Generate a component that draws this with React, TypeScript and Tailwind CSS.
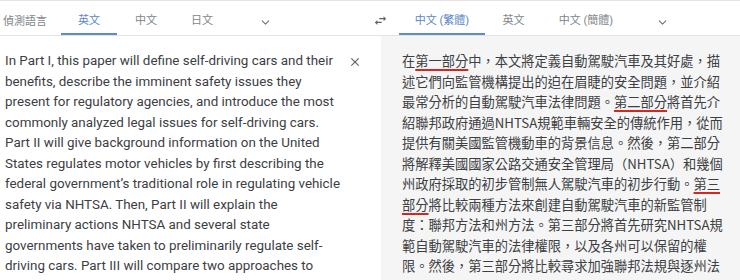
import { ChevronDown } from "lucide-react";

const source = [
  "In Part I, this paper will define self-driving cars and their",
  "benefits, describe the imminent safety issues they",
  "present for regulatory agencies, and introduce the most",
  "commonly analyzed legal issues for self-driving cars.",
  "Part II will give background information on the United",
  "States regulates motor vehicles by first describing the",
  "federal government’s traditional role in regulating vehicle",
  "safety via NHTSA. Then, Part II will explain the",
  "preliminary actions NHTSA and several state",
  "governments have taken to preliminarily regulate self-",
  "driving cars. Part III will compare two approaches to",
];

function Mark({ children }: { children: React.ReactNode }) {
  return (
    <span className="underline decoration-[#d8261f] decoration-2 underline-offset-[3px]">{children}</span>
  );
}

function Tab({ label, w, active }: { label: string; w: string; active?: boolean }) {
  return (
    <div
      className={`flex h-[34px] items-center justify-center pt-[8px] ${w} ${
        active ? "border-b-2 border-[#5b8bd0] text-[#5b86c8]" : "border-b-2 border-transparent text-[#80868b]"
      }`}
    >
      {label}
    </div>
  );
}

export default function App() {
  return (
    <div
      lang="zh-TW"
      className="h-[280px] w-[740px] overflow-hidden bg-white font-['Roboto','Noto_Sans_CJK_TC',sans-serif]"
    >
      <div className="flex border-y border-[#e3e3e3] text-[11px]">
        <div className="flex w-[370px]">
          <div className="flex h-[34px] w-[61px] items-center pl-[3px] pt-[8px] text-[#80868b]">偵測語言</div>
          <Tab label="英文" w="w-[56px]" active />
          <Tab label="中文" w="w-[58px]" />
          <Tab label="日文" w="w-[54px]" />
          <div className="flex h-[34px] w-[72px] items-center justify-center pt-[8px] text-[#70757a]">
            <ChevronDown size={13} strokeWidth={2} />
          </div>
        </div>
        <div className="flex h-[34px] w-[20px] items-center justify-center pt-[4px] text-[#5f6368]">
          <svg viewBox="0 0 24 24" className="h-[15px] w-[15px] fill-current">
            <path d="M6.99 11L3 15l3.99 4v-3H14v-2H6.99v-3zM21 9l-3.99-4v3H10v2h7.01v3L21 9z" />
          </svg>
        </div>
        <div className="flex pl-[9px]">
          <Tab label="中文 (繁體)" w="w-[86px]" active />
          <Tab label="英文" w="w-[57px]" />
          <Tab label="中文 (簡體)" w="w-[88px]" />
          <div className="flex h-[34px] w-[64px] items-center justify-center pt-[8px] text-[#70757a]">
            <ChevronDown size={13} strokeWidth={2} />
          </div>
        </div>
      </div>

      <div className="flex">
        <div lang="en" className="flex w-[381px] pl-[5px] pt-[15px]">
          <div className="w-[343px] text-[13.4px] leading-[20.5px] text-[#3c4043]">
            {source.map((line) => (
              <div key={line} className="whitespace-nowrap">
                {line}
              </div>
            ))}
          </div>
          <div className="pt-[4px] text-[#5f6368]">
            <svg viewBox="0 0 24 24" className="h-[14px] w-[14px] fill-current">
              <path d="M19 6.41L17.59 5 12 10.59 6.41 5 5 6.41 10.59 12 5 17.59 6.41 19 12 13.41 17.59 19 19 17.59 13.41 12z" />
            </svg>
          </div>
        </div>
        <div
          lang="zh-TW"
          className="h-[260px] flex-1 bg-[#f5f5f5] pl-[21px] pt-[15px] font-['Noto_Sans_CJK_TC','Noto_Sans_TC',sans-serif] text-[13.25px] leading-[20.5px] text-[#3c4043] [font-feature-settings:'locl']"
        >
          <div className="whitespace-nowrap">
            在<Mark>第一部分</Mark>中，本文將定義自動駕駛汽車及其好處，描
          </div>
          <div className="whitespace-nowrap">述它們向監管機構提出的迫在眉睫的安全問題，並介紹</div>
          <div className="whitespace-nowrap">
            最常分析的自動駕駛汽車法律問題。<Mark>第二部分</Mark>將首先介
          </div>
          <div className="whitespace-nowrap">紹聯邦政府通過NHTSA規範車輛安全的傳統作用，從而</div>
          <div className="whitespace-nowrap">提供有關美國監管機動車的背景信息。然後，第二部分</div>
          <div className="whitespace-nowrap">將解釋美國國家公路交通安全管理局（NHTSA）和幾個</div>
          <div className="whitespace-nowrap">
            州政府採取的初步管制無人駕駛汽車的初步行動。<Mark>第三</Mark>
          </div>
          <div className="whitespace-nowrap">
            <Mark>部分</Mark>將比較兩種方法來創建自動駕駛汽車的新監管制
          </div>
          <div className="whitespace-nowrap">度：聯邦方法和州方法。第三部分將首先研究NHTSA規</div>
          <div className="whitespace-nowrap">範自動駕駛汽車的法律權限，以及各州可以保留的權</div>
          <div className="whitespace-nowrap">限。然後，第三部分將比較尋求加強聯邦法規與逐州法</div>
        </div>
      </div>
    </div>
  );
}
